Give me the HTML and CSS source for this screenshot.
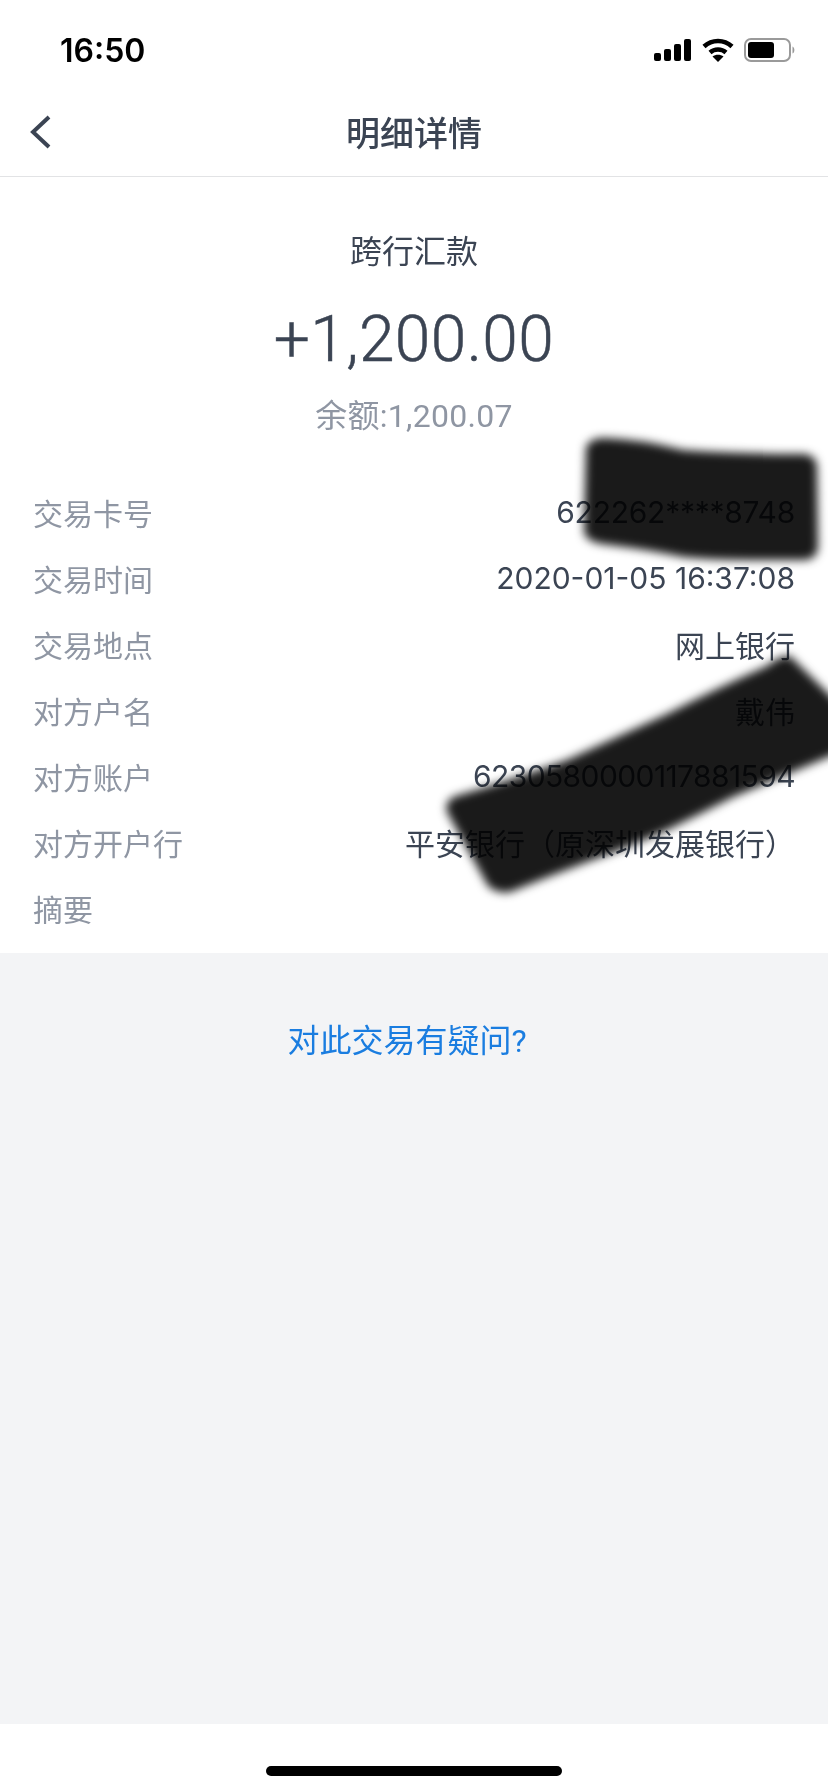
FILE: index.html
```html
<!DOCTYPE html>
<html>
  <head>
    <meta charset="utf-8" />
    <title>明细详情</title>
    <link rel="stylesheet" href="styles.css">
  </head>
  <body>
    <div id="page">
      <div class="status-bar">
        <span class="status-time">16:50</span>
        <div class="status-icons">
          <svg width="38" height="22" viewBox="0 0 38 22">
            <rect x="0" y="14" width="7" height="8" rx="2" />
            <rect x="10" y="10" width="7" height="12" rx="2" />
            <rect x="20" y="5" width="7" height="17" rx="2" />
            <rect x="30" y="0" width="7" height="22" rx="2" />
          </svg>
          <svg width="32" height="24" viewBox="0 0 32 24">
            <path d="M2 8.500C10 1 22 1 30 8.500" class="wifi-arc" />
            <path d="M8 14.500C12.500 10.500 19.500 10.500 24 14.500" class="wifi-arc" />
            <path d="M16 24L10.500 18.500C13.500 16 18.500 16 21.500 18.500Z" />
          </svg>
          <svg width="52" height="24" viewBox="0 0 52 24">
            <rect x="1" y="1" width="45" height="22" rx="6" class="battery-shell" />
            <rect x="4" y="4" width="26" height="16" rx="3" />
            <path d="M48.500 8.500C51 9.500 51 14.500 48.500 15.500Z" class="battery-cap" />
          </svg>
        </div>
      </div>

      <div class="nav-bar">
        <svg class="nav-back" width="22" height="34" viewBox="0 0 22 34">
          <path d="M19 2L3 17L19 32" />
        </svg>
        <span class="nav-title">明细详情</span>
      </div>

      <div class="detail">
        <div class="detail-type">跨行汇款</div>
        <div class="detail-amount">+1,200.00</div>
        <div class="detail-balance">余额:1,200.07</div>
        <div class="rows">
          <div class="row"><span class="row-label">交易卡号</span><span class="row-card">622262****8748</span></div>
          <div class="row"><span class="row-label">交易时间</span><span class="row-date">2020-01-05 16:37:08</span></div>
          <div class="row"><span class="row-label">交易地点</span><span>网上银行</span></div>
          <div class="row"><span class="row-label">对方户名</span><span>戴伟</span></div>
          <div class="row"><span class="row-label">对方账户</span><span class="row-account">6230580000117881594</span></div>
          <div class="row"><span class="row-label">对方开户行</span><span>平安银行（原深圳发展银行）</span></div>
          <div class="row"><span class="row-label">摘要</span><span></span></div>
        </div>
      </div>

      <div class="help">
        <a class="help-link" href="#">对此交易有疑问?</a>
      </div>

      <div class="home-area">
        <div class="home-bar"></div>
      </div>

      <!-- marker scribbles over the private data -->
      <svg class="scribble" width="828" height="1792" viewBox="0 0 828 1792">
        <defs>
          <filter id="soft" x="-10%" y="-10%" width="120%" height="120%" color-interpolation-filters="sRGB">
            <feGaussianBlur stdDeviation="5" />
          </filter>
        </defs>
        <path filter="url(#soft)" d="M586 447Q590 438 604 438Q640 439 683 450Q740 454 805 454Q817 456 817 468L818 547Q817 559 805 560L750 560Q712 560 683 557Q650 550 610 545Q586 543 584 532Z" />
        <path filter="url(#soft)" d="M790 656L840 705L840 752L733 797Q700 814 667 830Q627 848 587 862Q547 877 510 892Q497 894 488 886L447 812Q444 800 456 796Q512 780 567 760Q617 737 667 714Q717 688 767 666Q782 654 790 656Z" />
      </svg>
    </div>
  </body>
</html>
```

FILE: styles.css
```css
* {
  box-sizing: border-box;
}

body {
  margin: 0;
  font-family: "Roboto", "Noto Sans CJK SC", sans-serif;
  color: #3b4453;
}

#page {
  position: relative;
  display: flex;
  flex-direction: column;
  width: 828px;
  height: 1792px;
  overflow: hidden;
  background-color: #fff;
}

.status-bar {
  display: flex;
  align-items: center;
  justify-content: space-between;
  height: 88px;
  padding: 20px 32px 8px 60px;
}

.status-time {
  font-family: "Inter", sans-serif;
  font-size: 32px;
  font-weight: 600;
  color: #000;
}

.status-icons {
  display: flex;
  align-items: center;
  gap: 10px;
}

.wifi-arc {
  fill: none;
  stroke: #000;
  stroke-width: 4.500;
}

.battery-shell {
  fill: none;
  stroke: #9a9a9a;
  stroke-width: 2;
}

.battery-cap {
  fill: #9a9a9a;
}

.nav-bar {
  position: relative;
  display: flex;
  align-items: center;
  justify-content: center;
  height: 89px;
  padding-bottom: 2px;
  border-bottom: 1px solid #e2e3e5;
}

.nav-back {
  position: absolute;
  left: 30px;
  top: 27px;
}

.nav-back path {
  fill: none;
  stroke: #3b4453;
  stroke-width: 4;
}

.nav-title {
  font-size: 34px;
  font-weight: 500;
}

.detail {
  display: flex;
  flex-direction: column;
  align-items: center;
  height: 776px;
  padding: 52px 33px 0;
}

.detail-type {
  font-size: 32px;
  line-height: 46px;
}

.detail-amount {
  margin-top: 27px;
  font-size: 64px;
  font-weight: 300;
  line-height: 76px;
  letter-spacing: 0.4px;
  -webkit-text-stroke: 0.5px #3b4453;
}

.detail-balance {
  margin-top: 16px;
  font-size: 32px;
  line-height: 44px;
  letter-spacing: 0.3px;
  color: #8f96a3;
}

.rows {
  width: 100%;
  margin-top: 41px;
}

.row {
  display: flex;
  align-items: center;
  justify-content: space-between;
  height: 66px;
  font-size: 30px;
}

.row-label {
  color: #8f96a3;
}

.row-card,
.row-date,
.row-account {
  font-family: "Inter", sans-serif;
}

.row-card {
  letter-spacing: -0.25px;
}

.row-account {
  letter-spacing: -0.6px;
}

.help {
  flex: 1;
  padding: 64px 14px 0 0;
  text-align: center;
  background-color: #f3f4f6;
}

.help-link {
  font-size: 32px;
  line-height: 48px;
  color: #1a7de0;
  text-decoration: none;
}

.home-area {
  display: flex;
  justify-content: center;
  height: 68px;
  padding-top: 42px;
}

.home-bar {
  width: 296px;
  height: 10px;
  border-radius: 5px;
  background-color: #000;
}

.scribble {
  position: absolute;
  left: 0;
  top: 0;
  fill: #1a1a1a;
  mix-blend-mode: multiply;
  pointer-events: none;
}
```
